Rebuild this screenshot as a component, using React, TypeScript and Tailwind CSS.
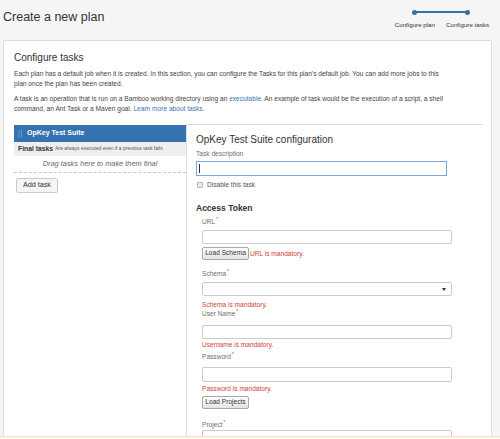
import React from 'react';

const font = "font-['Liberation_Sans',Arial,sans-serif]";

function Req() {
  return <span className="text-[#d04437] text-[5px] align-top ml-[1px] leading-none">*</span>;
}

function Label({ text, className }: { text: string; className: string }) {
  return (
    <div className={"text-[6.6px] leading-[9px] text-[#707070] " + className}>
      {text}
      <Req />
    </div>
  );
}

function ErrorText({ text, className }: { text: string; className: string }) {
  return <div className={"text-[6.6px] leading-[8px] text-[#d04437] " + className}>{text}</div>;
}

function TextInput({ className }: { className: string }) {
  return (
    <input
      readOnly
      className={"block w-[250px] border border-[#cccccc] rounded-[2px] bg-white outline-none " + className}
    />
  );
}

function SelectBox({ className }: { className: string }) {
  return (
    <div className={"flex w-[250px] items-center justify-end border border-[#cccccc] rounded-[2px] bg-white pr-[5px] " + className}>
      <svg width="4" height="3" viewBox="0 0 4 3">
        <path d="M0 0h4L2 3z" fill="#333" />
      </svg>
    </div>
  );
}

function SmallButton({ text }: { text: string }) {
  return (
    <button className="h-[13px] w-[47px] rounded-[2px] border border-[#a8a8a8] bg-gradient-to-b from-white to-[#e4e4e4] text-[6.6px] leading-none text-[#333]">
      {text}
    </button>
  );
}

export default function App() {
  return (
    <div className={`${font} h-[439px] overflow-hidden bg-[#f5f5f5] text-[#333]`}>
      {/* header */}
      <div className="flex h-[40px] justify-between pl-[3px] pr-[11px]">
        <h1 className="pt-[10px] text-[12.5px] leading-[15px] text-[#333]">Create a new plan</h1>
        <div className="relative flex gap-[11px] pt-[10px]">
          <div className="absolute left-[20px] right-[23px] top-[11px] h-[2px] bg-[#3b6ea5]" />
          <div className="flex flex-col items-center">
            <div className="z-10 h-[5px] w-[5px] rounded-full bg-[#3b6ea5]" />
            <div className="mt-[6px] text-[6.2px] leading-[8px] text-[#333]">Configure plan</div>
          </div>
          <div className="flex flex-col items-center">
            <div className="z-10 h-[5px] w-[5px] rounded-full bg-[#3b6ea5]" />
            <div className="mt-[6px] text-[6.2px] leading-[8px] text-[#333]">Configure tasks</div>
          </div>
        </div>
      </div>

      {/* panel */}
      <div className="ml-[3px] mr-[8px] rounded-[2px] border border-[#dddddd] bg-white pl-[10px] pr-[8px] pt-[11px]">
        <h2 className="text-[10px] leading-[12px] text-[#333]">Configure tasks</h2>
        <div className="mt-[5px] text-[6.6px] leading-[10px] text-[#444]">
          <span className="block whitespace-nowrap">
            Each plan has a default job when it is created. In this section, you can configure the Tasks for this plan's default job. You can add more jobs to this
          </span>
          <span className="block whitespace-nowrap">plan once the plan has been created.</span>
        </div>
        <div className="mt-[5px] text-[6.6px] leading-[10px] text-[#444]">
          <span className="block whitespace-nowrap">
            A task is an operation that is run on a Bamboo working directory using an <span className="text-[#3b73af]">executable</span>. An example of task would be the execution of a script, a shell
          </span>
          <span className="block whitespace-nowrap">
            command, an Ant Task or a Maven goal. <span className="text-[#3b73af]">Learn more about tasks</span>.
          </span>
        </div>

        <div className="mt-[10px] flex">
          {/* left: job list */}
          <div className="w-[172px] shrink-0 pt-[1px]">
            <div className="flex h-[17px] items-center gap-[4px] bg-[#3572b0] pl-[4px]">
              <svg width="5" height="8" viewBox="0 0 5 8">
                {[0, 2, 4, 6].map((y) => (
                  <g key={y} fill="#9dbde0">
                    <rect x="0.5" y={y + 0.5} width="1" height="1" />
                    <rect x="3" y={y + 0.5} width="1" height="1" />
                  </g>
                ))}
              </svg>
              <span className="text-[7px] font-bold text-white">OpKey Test Suite</span>
            </div>
            <div className="flex h-[14px] items-center gap-[2px] bg-[#efefef] pl-[4px]">
              <span className="text-[6.8px] font-bold text-[#333]">Final tasks</span>
              <span className="text-[5px] text-[#555]">Are always executed even if a previous task fails</span>
            </div>
            <div className="border-b border-dashed border-[#c8c8c8] pb-[4px] pt-[3px] text-center text-[7.4px] italic leading-[9px] text-[#666]">
              Drag tasks here to make them final
            </div>
            <div className="flex pl-[2px] pt-[5px]">
              <button className="h-[15px] rounded-[2px] border border-[#cccccc] bg-[#f5f5f5] px-[6px] text-[7.2px] text-[#333]">
                Add task
              </button>
            </div>
          </div>

          {/* right: task config */}
          <div className="h-[330px] w-[297px] border-l border-t border-[#dddddd] pl-[9px] pt-[9px]">
            <h3 className="text-[10px] leading-[12px] text-[#333]">OpKey Test Suite configuration</h3>
            <div className="mt-[3px] text-[6.6px] leading-[10px] text-[#707070]">Task description</div>
            <div className="mt-[2px] flex h-[15px] w-[251px] items-center border border-[#7aa7da] bg-white pl-[2px]">
              <div className="h-[9px] w-px bg-[#333]" />
            </div>
            <div className="mt-[4px] flex h-[10px] items-center gap-[4px] pl-[1px]">
              <div className="h-[6px] w-[6px] rounded-[1px] border border-[#b5b5b5] bg-[#e9e9e9]" />
              <span className="text-[6.6px] text-[#555]">Disable this task</span>
            </div>
            <div className="mt-[13px] text-[8.5px] font-bold leading-[11px] text-[#333]">Access Token</div>

            <div className="pl-[6px]">
              <Label text="URL" className="mt-[3px]" />
              <TextInput className="mt-[4px] h-[14px]" />
              <div className="mt-[3px] flex items-center gap-[1px]">
                <SmallButton text="Load Schema" />
                <span className="text-[6.6px] text-[#d04437]">URL is mandatory.</span>
              </div>

              <Label text="Schema" className="mt-[9px]" />
              <SelectBox className="mt-[4px] h-[14px]" />
              <ErrorText text="Schema is mandatory." className="mt-[5px]" />

              <Label text="User Name" className="mt-0" />
              <TextInput className="mt-[7px] h-[14px]" />
              <ErrorText text="Username is mandatory." className="mt-[2px]" />

              <Label text="Password" className="mt-[3px]" />
              <TextInput className="mt-[6px] h-[15px]" />
              <ErrorText text="Password is mandatory." className="mt-[3px]" />
              <div className="mt-[3px] flex">
                <SmallButton text="Load Projects" />
              </div>

              <Label text="Project" className="mt-[11px]" />
              <SelectBox className="mt-[1px] h-[14px]" />
            </div>
          </div>
        </div>
      </div>

      {/* bottom notice strip */}
      <div className="fixed bottom-0 left-0 h-[3px] w-full border-t border-[#efe5bf] bg-[#fdf9e6]" />
    </div>
  );
}
